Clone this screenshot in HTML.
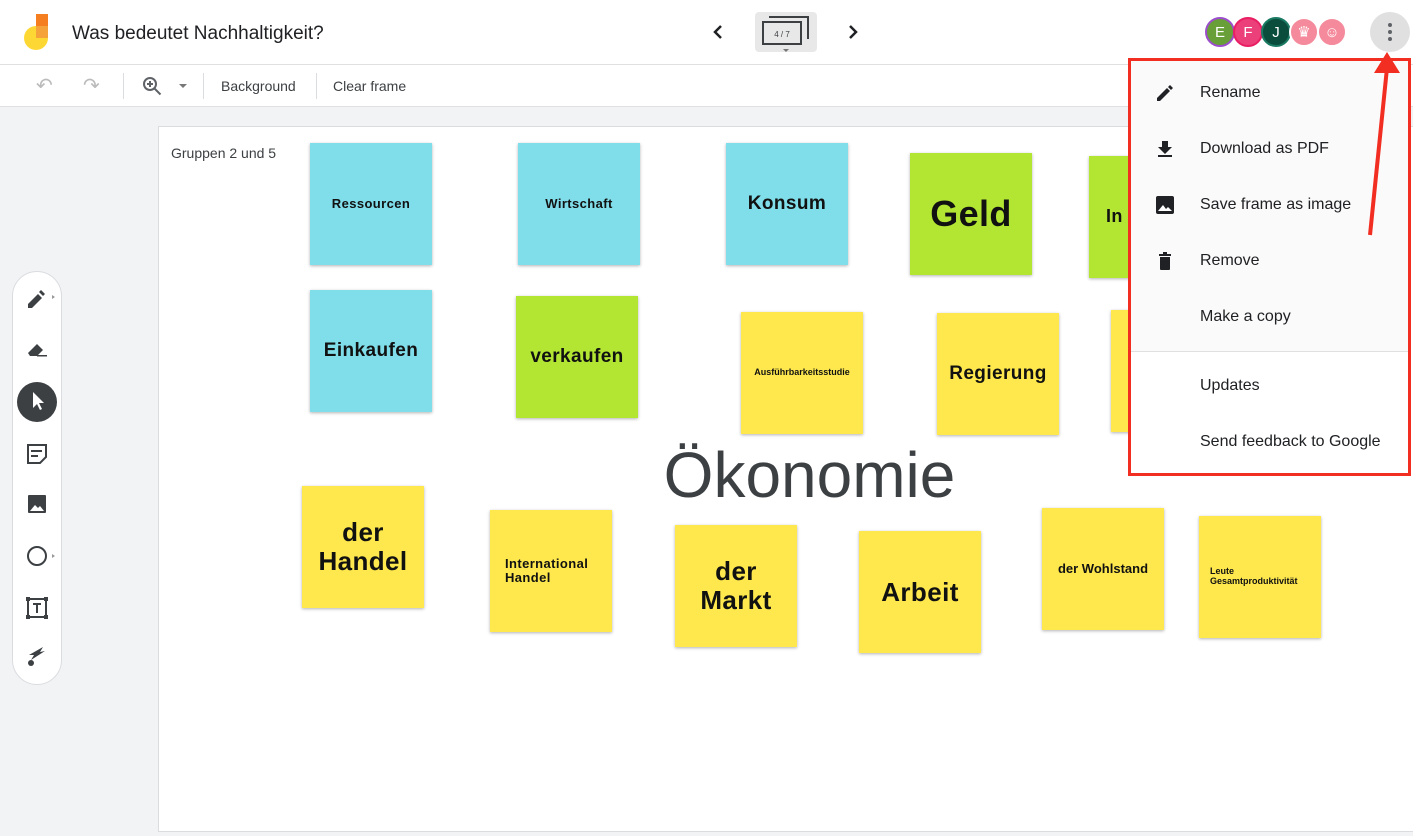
<!DOCTYPE html>
<html><head><meta charset="utf-8"><style>
*{box-sizing:border-box;margin:0;padding:0}
body{width:1413px;height:836px;overflow:hidden;background:#f1f3f4;font-family:"Liberation Sans",sans-serif;position:relative}
.abs{position:absolute}
.top{left:0;top:0;width:1413px;height:65px;background:#fff;border-bottom:1px solid #e0e0e0}
.tb{left:0;top:65px;width:1413px;height:42px;background:#fff;border-bottom:1px solid #e0e0e0}
.tbt{font-size:14px;color:#3c4043;top:78px}
.sep{width:1px;height:26px;background:#dadce0;top:73px}
.frame{left:158px;top:126px;width:1260px;height:706px;background:#fff;border:1px solid #dadce0}
.st{position:absolute;width:122px;height:122px;display:flex;align-items:center;justify-content:center;text-align:center;font-weight:bold;color:#111;box-shadow:0 1px 3px rgba(0,0,0,.3);line-height:1.1;letter-spacing:.4px}
.b{background:#80deea}.g{background:#b2e632}.y{background:#fee84d}
.av{width:30px;height:30px;border-radius:50%;top:17px;color:#fff;font-size:15px;display:flex;align-items:center;justify-content:center;border:2px solid #fff}
.menu{left:1128px;top:58px;width:283px;height:418px;background:#fafafa;border:3px solid #f22e22}
.mi{position:absolute;left:69px;font-size:16px;color:#202124}
.ic{position:absolute;left:24px}
</style></head><body>
<div class="abs top"></div>
<svg class="abs" style="left:22px;top:13px" width="30" height="40"><circle cx="14" cy="25" r="12" fill="#fdd835"/><rect x="14" y="1" width="12" height="12" fill="#f47e20"/><rect x="14" y="13" width="12" height="12" fill="#f6a23b"/></svg>
<div class="abs" style="left:72px;top:23px;font-size:19px;color:#202124">Was bedeutet Nachhaltigkeit?</div>
<svg class="abs" style="left:712px;top:25px" width="12" height="14"><path d="M9 1L3 7l6 6" fill="none" stroke="#202124" stroke-width="2.5"/></svg>
<svg class="abs" style="left:847px;top:25px" width="12" height="14"><path d="M3 1l6 6-6 6" fill="none" stroke="#202124" stroke-width="2.5"/></svg>
<div class="abs" style="left:755px;top:12px;width:62px;height:40px;background:#e8e8e8;border-radius:4px"></div>
<svg class="abs" style="left:755px;top:12px" width="62" height="42"><path d="M14 5H53V27" fill="none" stroke="#3c4043" stroke-width="2"/><rect x="8" y="10" width="38" height="22" fill="#e8e8e8" stroke="#3c4043" stroke-width="2"/><text x="27" y="25" font-size="8" text-anchor="middle" fill="#3c4043" font-family="Liberation Sans">4 / 7</text><path d="M28 37h6l-3 3z" fill="#777"/></svg>
<div class="abs av" style="left:1205px;background:#689f38;border-color:#9c4dcc">E</div>
<div class="abs av" style="left:1233px;background:#ec407a;border-color:#e91e63">F</div>
<div class="abs av" style="left:1261px;background:#0b4d3c;border-color:#1b7a63">J</div>
<div class="abs av" style="left:1289px;background:#f48a9b">♛</div>
<div class="abs av" style="left:1317px;background:#f48a9b">☺</div>
<div class="abs" style="left:1370px;top:12px;width:40px;height:40px;border-radius:50%;background:#e0e0e0"></div>
<svg class="abs" style="left:1370px;top:12px" width="40" height="40"><circle cx="20" cy="13" r="2" fill="#5f6368"/><circle cx="20" cy="20" r="2" fill="#5f6368"/><circle cx="20" cy="27" r="2" fill="#5f6368"/></svg>
<div class="abs tb"></div>
<div class="abs tbt" style="left:36px;color:#bbb;font-size:20px;top:73px">↶</div>
<div class="abs tbt" style="left:83px;color:#bbb;font-size:20px;top:73px">↷</div>
<div class="abs sep" style="left:123px"></div>
<svg class="abs" style="left:142px;top:76px" width="20" height="20"><circle cx="8" cy="8" r="6" fill="none" stroke="#5f6368" stroke-width="2"/><path d="M12.5 12.5l6 6M5 8h6M8 5v6" stroke="#5f6368" stroke-width="2"/></svg>
<svg class="abs" style="left:179px;top:84px" width="8" height="5"><path d="M0 0h8l-4 4z" fill="#777"/></svg>
<div class="abs sep" style="left:203px"></div>
<div class="abs tbt" style="left:221px">Background</div>
<div class="abs sep" style="left:316px"></div>
<div class="abs tbt" style="left:333px">Clear frame</div>
<div class="abs frame"></div>
<div class="abs" style="left:171px;top:145px;font-size:14px;color:#3c4043">Gruppen 2 und 5</div>
<div class="st b" style="left:310px;top:143px;font-size:13px">Ressourcen</div>
<div class="st b" style="left:518px;top:143px;font-size:13px">Wirtschaft</div>
<div class="st b" style="left:726px;top:143px;font-size:19px">Konsum</div>
<div class="st g" style="left:910px;top:153px;font-size:36px">Geld</div>
<div class="st g" style="left:1089px;top:156px;font-size:18px;justify-content:flex-start;padding-left:17px">In</div>
<div class="st b" style="left:310px;top:290px;font-size:19px">Einkaufen</div>
<div class="st g" style="left:516px;top:296px;font-size:19px">verkaufen</div>
<div class="st y" style="left:741px;top:312px;font-size:9px;letter-spacing:0">Ausführbarkeitsstudie</div>
<div class="st y" style="left:937px;top:313px;font-size:19px">Regierung</div>
<div class="st y" style="left:1111px;top:310px"></div>
<div class="abs" style="left:0;width:1413px;text-align:center;top:438px;padding-left:206px;font-size:64px;color:#3c4043">Ökonomie</div>
<div class="st y" style="left:302px;top:486px;font-size:26px">der<br>Handel</div>
<div class="st y" style="left:490px;top:510px;font-size:13px;justify-content:flex-start;text-align:left;padding-left:15px">International<br>Handel</div>
<div class="st y" style="left:675px;top:525px;font-size:26px">der<br>Markt</div>
<div class="st y" style="left:859px;top:531px;font-size:26px">Arbeit</div>
<div class="st y" style="left:1042px;top:508px;font-size:13px;letter-spacing:0">der Wohlstand</div>
<div class="st y" style="left:1199px;top:516px;font-size:9px;justify-content:flex-start;text-align:left;padding-left:11px;letter-spacing:0">Leute<br>Gesamtproduktivität</div>
<div class="abs" style="left:12px;top:271px;width:50px;height:414px;background:#fff;border:1px solid #dadce0;border-radius:25px"></div>
<svg class="abs" style="left:12px;top:271px" width="50" height="414">
<g fill="#3c4043">
<path d="M16 33l10-10 4 4-10 10h-4zM27 21l2-2 4 4-2 2z"/><path d="M40 24l3 2-3 2z" fill="#999"/>
<path d="M16 82l9-9 6 6-6 6h-7zM25 84h10v1.5H25z"/>
<circle cx="25" cy="131" r="20"/><path d="M21 121v16l4-4 3 6 2-1-3-6h5z" fill="#fff"/>
<path d="M16 174h18v12l-6 6H16z" fill="none" stroke="#3c4043" stroke-width="2"/><path d="M19 179h11v2H19zM19 184h7v2h-7z"/>
<rect x="16" y="224" width="18" height="18" rx="1"/><path d="M18 240l5-6 3 3 2-2 4 5z" fill="#fff"/>
<circle cx="25" cy="285" r="9" fill="none" stroke="#3c4043" stroke-width="2"/><path d="M40 283l3 2-3 2z" fill="#999"/>
<rect x="16" y="328" width="18" height="18" fill="none" stroke="#3c4043" stroke-width="2"/><rect x="14" y="326" width="4" height="4"/><rect x="32" y="326" width="4" height="4"/><rect x="14" y="344" width="4" height="4"/><rect x="32" y="344" width="4" height="4"/><path d="M21 332h8v2h-3v8h-2v-8h-3z"/>
<path d="M17 384l14-8-3 5 5-1-14 9 3-5z"/><circle cx="19" cy="392" r="3"/>
</g></svg>
<div class="abs menu">
<svg class="ic" style="top:22px" width="20" height="20"><path d="M2 15v3h3l10-10-3-3zM13 4l3 3 2-2-3-3z" fill="#202124"/></svg>
<div class="mi" style="top:23px">Rename</div>
<svg class="ic" style="top:78px" width="20" height="20"><path d="M7 2h6v6h4l-7 7-7-7h4zM3 16h14v2H3z" fill="#202124"/></svg>
<div class="mi" style="top:79px">Download as PDF</div>
<svg class="ic" style="top:134px" width="20" height="20"><rect x="1" y="1" width="18" height="18" rx="2" fill="#202124"/><path d="M3 16l5-6 3 4 2-2 4 4z" fill="#fff"/></svg>
<div class="mi" style="top:135px">Save frame as image</div>
<svg class="ic" style="top:190px" width="20" height="20"><path d="M4 3h12v2H4zM8 1h4v2H8zM5 6h10v12a1 1 0 01-1 1H6a1 1 0 01-1-1z" fill="#202124"/></svg>
<div class="mi" style="top:247px">Make a copy</div>
<div class="mi" style="top:191px">Remove</div>
<div class="abs" style="left:0;top:290px;width:277px;height:1px;background:#e0e0e0"></div>
<div class="abs" style="left:0;top:291px;width:277px;height:121px;background:#fff"></div>
<div class="mi" style="top:316px">Updates</div>
<div class="mi" style="top:372px">Send feedback to Google</div>
</div>
<svg class="abs" style="left:1360px;top:48px" width="50" height="195"><path d="M10 187L27 20" stroke="#f22e22" stroke-width="4"/><path d="M27 4L14 25h26z" fill="#f22e22"/></svg>
</body></html>
